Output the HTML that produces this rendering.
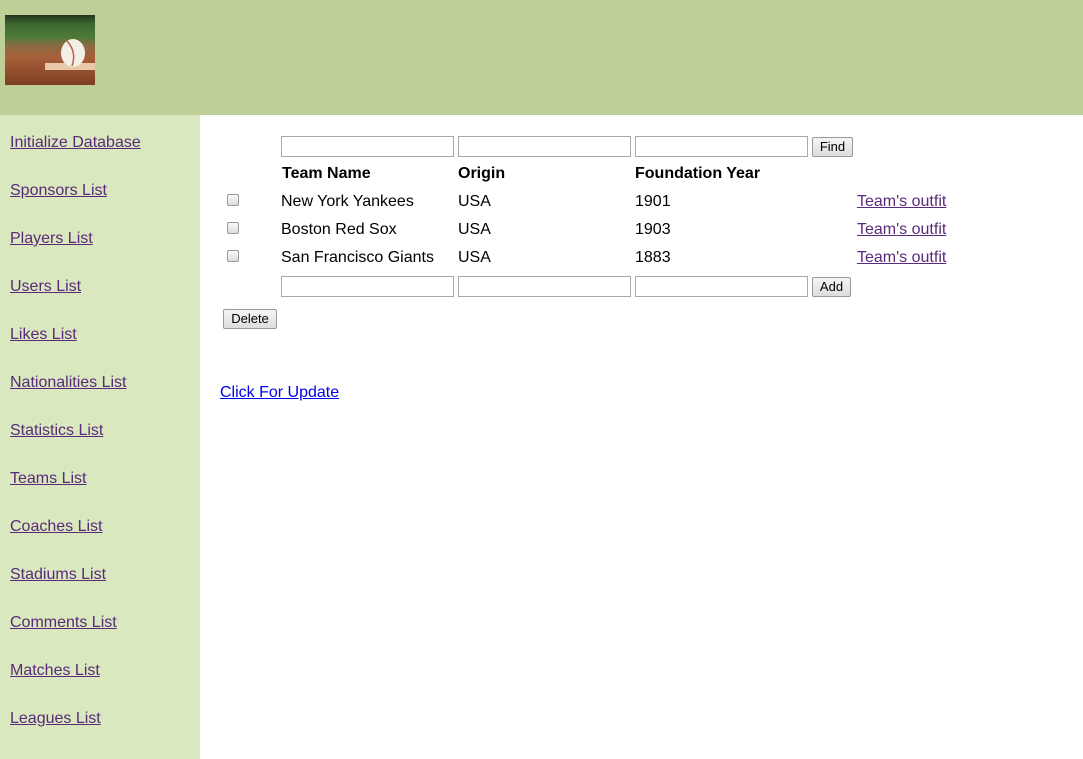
<!DOCTYPE html>
<html><head><style>
*{margin:0;padding:0;box-sizing:border-box}
body{width:1083px;height:759px;font-family:"Liberation Sans",Arial,sans-serif;font-size:16px;background:#fff;position:relative;overflow:hidden}
#hdr{position:absolute;left:0;top:0;width:1083px;height:115px;background:#becf98}
#logo{position:absolute;left:5px;top:15px;width:90px;height:70px;background:linear-gradient(#23351f 0,#3f6a30 14%,#4e7a38 32%,#8a6a44 44%,#a8603a 60%,#7e3e22 100%);overflow:hidden}
#side{position:absolute;left:0;top:115px;width:200px;height:644px;background:#d9e8be}
#side a{position:absolute;left:10px;font-size:16px}
a{color:#5a2a7a;text-decoration:underline}
.ab{position:absolute}
input.t{position:absolute;height:21px;width:173px;border:1px solid #a9a9a9;background:#fff}
.btn{position:absolute;height:20px;border:1px solid #999;border-radius:2px;background:linear-gradient(#f5f5f5,#ddd);font-size:13px;font-family:"Liberation Sans",Arial,sans-serif;text-align:center;line-height:18px}
.cb{position:absolute;left:227px;width:12px;height:12px;border:1px solid #999;border-radius:2px;background:linear-gradient(#fafafa,#ddd)}
.b{font-weight:bold}
</style></head><body>
<div id="hdr"><div id="logo">
<div style="position:absolute;left:40px;top:48px;width:50px;height:7px;background:#e8c8a8"></div>
<svg width="90" height="70" style="position:absolute;left:0;top:0"><ellipse cx="68" cy="38" rx="12" ry="14" fill="#f4efe6"/><path d="M62 26 Q72 37 67 51" stroke="#b86048" fill="none" stroke-width="1.5"/></svg>
</div></div>
<div id="side">
<a style="top:19px">Initialize Database</a>
<a style="top:67px">Sponsors List</a>
<a style="top:115px">Players List</a>
<a style="top:163px">Users List</a>
<a style="top:211px">Likes List</a>
<a style="top:259px">Nationalities List</a>
<a style="top:307px">Statistics List</a>
<a style="top:355px">Teams List</a>
<a style="top:403px">Coaches List</a>
<a style="top:451px">Stadiums List</a>
<a style="top:499px">Comments List</a>
<a style="top:547px">Matches List</a>
<a style="top:595px">Leagues List</a>
</div>
<input class="t" style="left:281px;top:136px"><input class="t" style="left:458px;top:136px"><input class="t" style="left:635px;top:136px">
<div class="btn" style="left:812px;top:137px;width:41px">Find</div>
<div class="ab b" style="left:282px;top:165px">Team Name</div>
<div class="ab b" style="left:458px;top:165px">Origin</div>
<div class="ab b" style="left:635px;top:165px">Foundation Year</div>
<div class="cb" style="top:194px"></div><div class="ab" style="left:281px;top:193px">New York Yankees</div><div class="ab" style="left:458px;top:193px">USA</div><div class="ab" style="left:635px;top:193px">1901</div><a class="ab" style="left:857px;top:193px">Team's outfit</a>
<div class="cb" style="top:222px"></div><div class="ab" style="left:281px;top:221px">Boston Red Sox</div><div class="ab" style="left:458px;top:221px">USA</div><div class="ab" style="left:635px;top:221px">1903</div><a class="ab" style="left:857px;top:221px">Team's outfit</a>
<div class="cb" style="top:250px"></div><div class="ab" style="left:281px;top:249px">San Francisco Giants</div><div class="ab" style="left:458px;top:249px">USA</div><div class="ab" style="left:635px;top:249px">1883</div><a class="ab" style="left:857px;top:249px">Team's outfit</a>
<input class="t" style="left:281px;top:276px"><input class="t" style="left:458px;top:276px"><input class="t" style="left:635px;top:276px">
<div class="btn" style="left:812px;top:277px;width:39px">Add</div>
<div class="btn" style="left:223px;top:309px;width:54px">Delete</div>
<a class="ab" style="left:220px;top:384px;color:#0000ee">Click For Update</a>
</body></html>
